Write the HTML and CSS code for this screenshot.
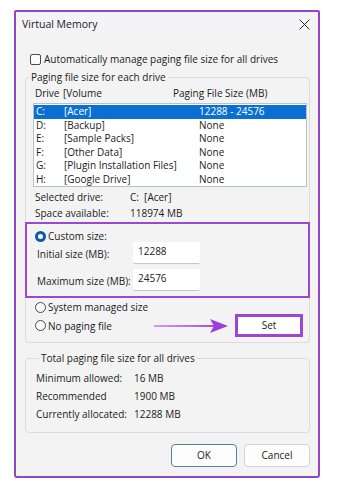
FILE: index.html
```html
<!DOCTYPE html>
<html lang="en">
<head>
    <meta charset="UTF-8">
    <meta name="viewport" content="width=device-width, initial-scale=1.0">
    <link rel="stylesheet" href="styles.css">
    <title>Virtual Memory</title>
</head>
<body>
    <div class="dialog">
        <div class="titlebar">
            <span class="title">Virtual Memory</span>
            <svg class="close" width="11" height="11" viewBox="0 0 11 11">
                <path d="M0.5 0.5 L10.5 10.5 M10.5 0.5 L0.5 10.5" stroke="#2b2b2b" stroke-width="1"/>
            </svg>
        </div>

        <div class="content">
            <div class="check-row">
                <span class="checkbox"></span>
                <span>Automatically manage paging file size for all drives</span>
            </div>

            <fieldset class="group group-drives">
                <legend>Paging file size for each drive</legend>

                <div class="list-head">
                    <span>Drive</span>
                    <span>[Volume</span>
                    <span>Paging File Size (MB)</span>
                </div>

                <div class="drive-list">
                    <div class="drive-row selected"><span>C:</span><span>[Acer]</span><span>12288 - 24576</span></div>
                    <div class="drive-row"><span>D:</span><span>[Backup]</span><span>None</span></div>
                    <div class="drive-row"><span>E:</span><span>[Sample Packs]</span><span>None</span></div>
                    <div class="drive-row"><span>F:</span><span>[Other Data]</span><span>None</span></div>
                    <div class="drive-row"><span>G:</span><span>[Plugin Installation Files]</span><span>None</span></div>
                    <div class="drive-row"><span>H:</span><span>[Google Drive]</span><span>None</span></div>
                </div>

                <div class="info-row"><span class="info-label">Selected drive:</span><span>C:&nbsp; [Acer]</span></div>
                <div class="info-row"><span class="info-label">Space available:</span><span>118974 MB</span></div>

                <div class="custom-box">
                    <div class="radio-row">
                        <span class="radio checked"></span>
                        <span>Custom size:</span>
                    </div>
                    <div class="size-row first">
                        <span class="size-label">Initial size (MB):</span>
                        <div class="textbox">12288</div>
                    </div>
                    <div class="size-row">
                        <span class="size-label">Maximum size (MB):</span>
                        <div class="textbox">24576</div>
                    </div>
                </div>

                <div class="radio-row plain">
                    <span class="radio"></span>
                    <span>System managed size</span>
                </div>

                <div class="set-row">
                    <div class="radio-row plain nopage">
                        <span class="radio"></span>
                        <span>No paging file</span>
                    </div>
                    <svg class="arrow" width="74" height="16" viewBox="0 0 74 16">
                        <defs>
                            <linearGradient id="arrowGrad" gradientUnits="userSpaceOnUse" x1="0" y1="8" x2="74" y2="8">
                                <stop offset="0" stop-color="#cf9cf0"/>
                                <stop offset="1" stop-color="#9b3fdb"/>
                            </linearGradient>
                        </defs>
                        <path d="M0 8 L60 8" stroke="url(#arrowGrad)" stroke-width="2.2"/>
                        <path d="M56 1 L74 8 L56 15 L60 8 Z" fill="#9b3fdb"/>
                    </svg>
                    <div class="set-frame">
                        <div class="set-button">Set</div>
                    </div>
                </div>
            </fieldset>

            <fieldset class="group group-total">
                <legend>Total paging file size for all drives</legend>
                <div class="total-row"><span class="total-label">Minimum allowed:</span><span>16 MB</span></div>
                <div class="total-row"><span class="total-label">Recommended</span><span>1900 MB</span></div>
                <div class="total-row"><span class="total-label">Currently allocated:</span><span>12288 MB</span></div>
            </fieldset>

            <div class="buttons">
                <div class="btn btn-ok">OK</div>
                <div class="btn">Cancel</div>
            </div>
        </div>
    </div>
</body>
</html>
```

FILE: styles.css
```css
* {
    box-sizing: border-box;
    margin: 0;
    padding: 0;
}

body {
    background-color: #ffffff;
    font-family: "Open Sans", "Noto Sans", sans-serif;
    font-size: 10px;
    color: #1b1b1b;
}

.dialog {
    margin: 10px 0 0 14px;
    width: 306px;
    height: 468px;
    border: 2px solid #9146c9;
    border-radius: 2px 2px 3px 3px;
    background-color: #f3f3f3;
}

.titlebar {
    height: 24px;
    display: flex;
    align-items: center;
    justify-content: space-between;
    padding: 0 8px 0 6px;
    background-color: #f4f4f7;
}

.title {
    font-size: 10.5px;
}

.content {
    padding: 0 8px 0 9px;
}

.check-row {
    margin-top: 16px;
    height: 14px;
    display: flex;
    align-items: center;
    padding-left: 5px;
}

.checkbox {
    width: 11px;
    height: 11px;
    border: 1px solid #4a4a4a;
    border-radius: 2px;
    background-color: #fbfbfb;
    margin-right: 3px;
}

.group {
    border: 1px solid #dcdcdc;
    border-radius: 4px;
    min-width: 0;
}

.group legend {
    margin-left: 3px;
    padding: 0 2px;
    line-height: 14px;
}

.group-drives {
    margin-top: 4px;
    padding: 0 0 5px 0;
}

.list-head {
    margin-top: 2px;
    height: 14px;
    line-height: 14px;
    padding-left: 9px;
    display: grid;
    grid-template-columns: 28px 110px auto;
}

.drive-list {
    margin: 3px 2px 0 7px;
    height: 84px;
    border: 1px solid #b8c0c8;
    background-color: #ffffff;
    padding: 1px 0 0 0;
}

.drive-row {
    height: 13.5px;
    line-height: 13.5px;
    padding-left: 2px;
    display: grid;
    grid-template-columns: 28px 135px auto;
}

.drive-row.selected {
    background-color: #0a6fd3;
    color: #ffffff;
}

.info-row {
    margin-top: 2px;
    height: 16px;
    line-height: 16px;
    padding-left: 9px;
    display: flex;
}

.info-row + .info-row {
    margin-top: 0;
}

.info-label {
    width: 95px;
}

.custom-box {
    margin: 1px -1px 0 -1px;
    height: 76px;
    border: 2px solid #9a48d3;
    padding: 5px 0 0 8px;
}

.radio-row {
    height: 14px;
    display: flex;
    align-items: center;
}

.radio {
    width: 11px;
    height: 11px;
    border: 1px solid #4a4a4a;
    border-radius: 50%;
    margin-right: 2px;
    background-color: #fafafa;
}

.radio.checked {
    border: 3px solid #0d5aa8;
    background-color: #ffffff;
}

.size-row {
    height: 22px;
    margin-top: 5px;
    display: flex;
    align-items: center;
    padding-left: 2px;
}

.size-row.first {
    margin-top: -1px;
}

.size-label {
    width: 96px;
    padding-top: 2px;
}

.textbox {
    width: 67px;
    height: 22px;
    background-color: #ffffff;
    border-bottom: 1px solid #c7c7c7;
    border-radius: 2px;
    padding: 2px 0 0 5px;
    align-self: flex-start;
}

.radio-row.plain {
    margin-top: 2px;
    padding-left: 9px;
}

.set-row {
    height: 23px;
    display: flex;
    align-items: center;
}

.radio-row.nopage {
    margin-top: 0;
    flex: 1;
}

.arrow {
    margin-right: 7px;
}

.set-frame {
    width: 68px;
    height: 23px;
    border: 3px solid #9a48d3;
    background-color: #ffffff;
    margin-right: 6px;
}

.set-button {
    line-height: 17px;
    text-align: center;
}

.group-total {
    margin-top: 8px;
    padding: 0 0 9px 10px;
}

.total-row {
    height: 18px;
    line-height: 18px;
    display: flex;
}

.total-row:first-of-type {
    margin-top: 4px;
}

.total-label {
    width: 98px;
}

.buttons {
    margin-top: 11px;
    display: flex;
    justify-content: flex-end;
    gap: 7px;
}

.btn {
    width: 66px;
    height: 23px;
    line-height: 21px;
    text-align: center;
    background-color: #fdfdfd;
    border: 1px solid #d3d3d3;
    border-radius: 4px;
}

.btn-ok {
    border-color: #5b8198;
}
```
